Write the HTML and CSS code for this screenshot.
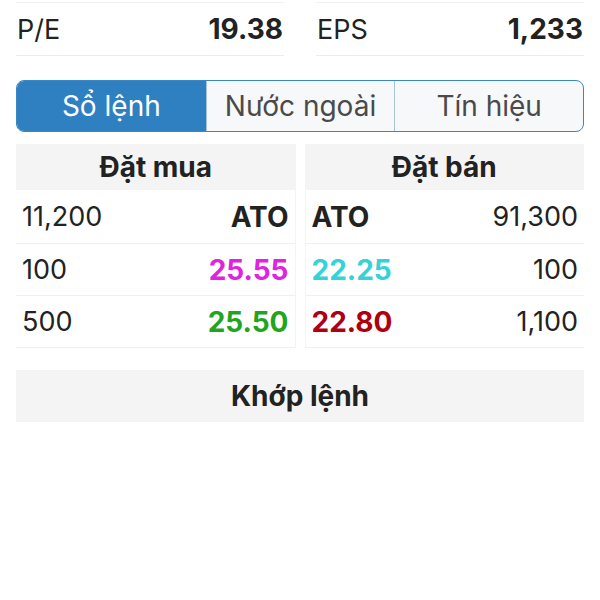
FILE: index.html
```html
<!DOCTYPE html>
<html>
<head>
    <meta charset="utf-8">
    <title>Sổ lệnh</title>
    <link rel="stylesheet" href="styles.css">
</head>
<body>
<div class="stats">
    <div class="stat"><span>P/E</span><b>19.38</b></div>
    <div class="stat"><span>EPS</span><b>1,233</b></div>
</div>

<div class="tabs">
    <a href="javascript:;" class="tab on">Sổ lệnh</a>
    <a href="javascript:;" class="tab">Nước ngoài</a>
    <a href="javascript:;" class="tab">Tín hiệu</a>
</div>

<div class="book">
    <div class="side buy">
        <div class="head">Đặt mua</div>
        <div class="row"><span>11,200</span><b>ATO</b></div>
        <div class="row"><span>100</span><b class="pink">25.55</b></div>
        <div class="row"><span>500</span><b class="green">25.50</b></div>
    </div>
    <div class="side sell">
        <div class="head">Đặt bán</div>
        <div class="row"><b>ATO</b><span>91,300</span></div>
        <div class="row"><b class="cyan">22.25</b><span>100</span></div>
        <div class="row"><b class="red">22.80</b><span>1,100</span></div>
    </div>
</div>

<div class="match">Khớp lệnh</div>
</body>
</html>
```

FILE: styles.css
```css
*{margin:0;padding:0;box-sizing:border-box;text-decoration:none;}
body{padding:2px 16px 0;font-family:Inter,"Noto Sans",sans-serif;font-size:27px;color:#222;background:#fff;}
b{font-weight:700;font-size:28px;}

.stats{display:grid;grid-template-columns:1fr 1fr;column-gap:32px;}
.stat{display:flex;justify-content:space-between;align-items:center;height:54px;padding:0 1px;border-top:1px solid #f0f0f0;border-bottom:1px solid #ececec;}

.tabs{display:grid;grid-template-columns:1fr 1fr 1fr;height:52px;margin-top:24px;border:1.5px solid #3a87c4;border-radius:8px;overflow:hidden;background:#f7f8fa;}
.tab{display:flex;align-items:center;justify-content:center;color:#4a4a4a;font-size:28px;border-left:1px solid #a9c6de;}
.tab:first-child{border-left:none;}
.tab.on{background:#2f80c1;color:#fff;}

.book{display:grid;grid-template-columns:1fr 1fr;column-gap:9px;margin-top:12px;}
.head{height:46px;display:flex;align-items:center;justify-content:center;background:#f4f4f4;font-weight:700;font-size:28px;}
.row{display:flex;justify-content:space-between;align-items:center;height:52px;padding:0 6px;border-bottom:1px solid #f0f0f0;}
.row:nth-child(2){height:54px;}
.buy .row{border-right:1px solid #f4f4f4;}
.sell .row{border-left:1px solid #f4f4f4;}
.pink{color:#e024de;}
.cyan{color:#35d2d8;}
.green{color:#1fa51f;}
.red{color:#b0000e;}

.match{height:52px;margin-top:22px;display:flex;align-items:center;justify-content:center;background:#f4f4f4;font-weight:700;font-size:28px;}
```
